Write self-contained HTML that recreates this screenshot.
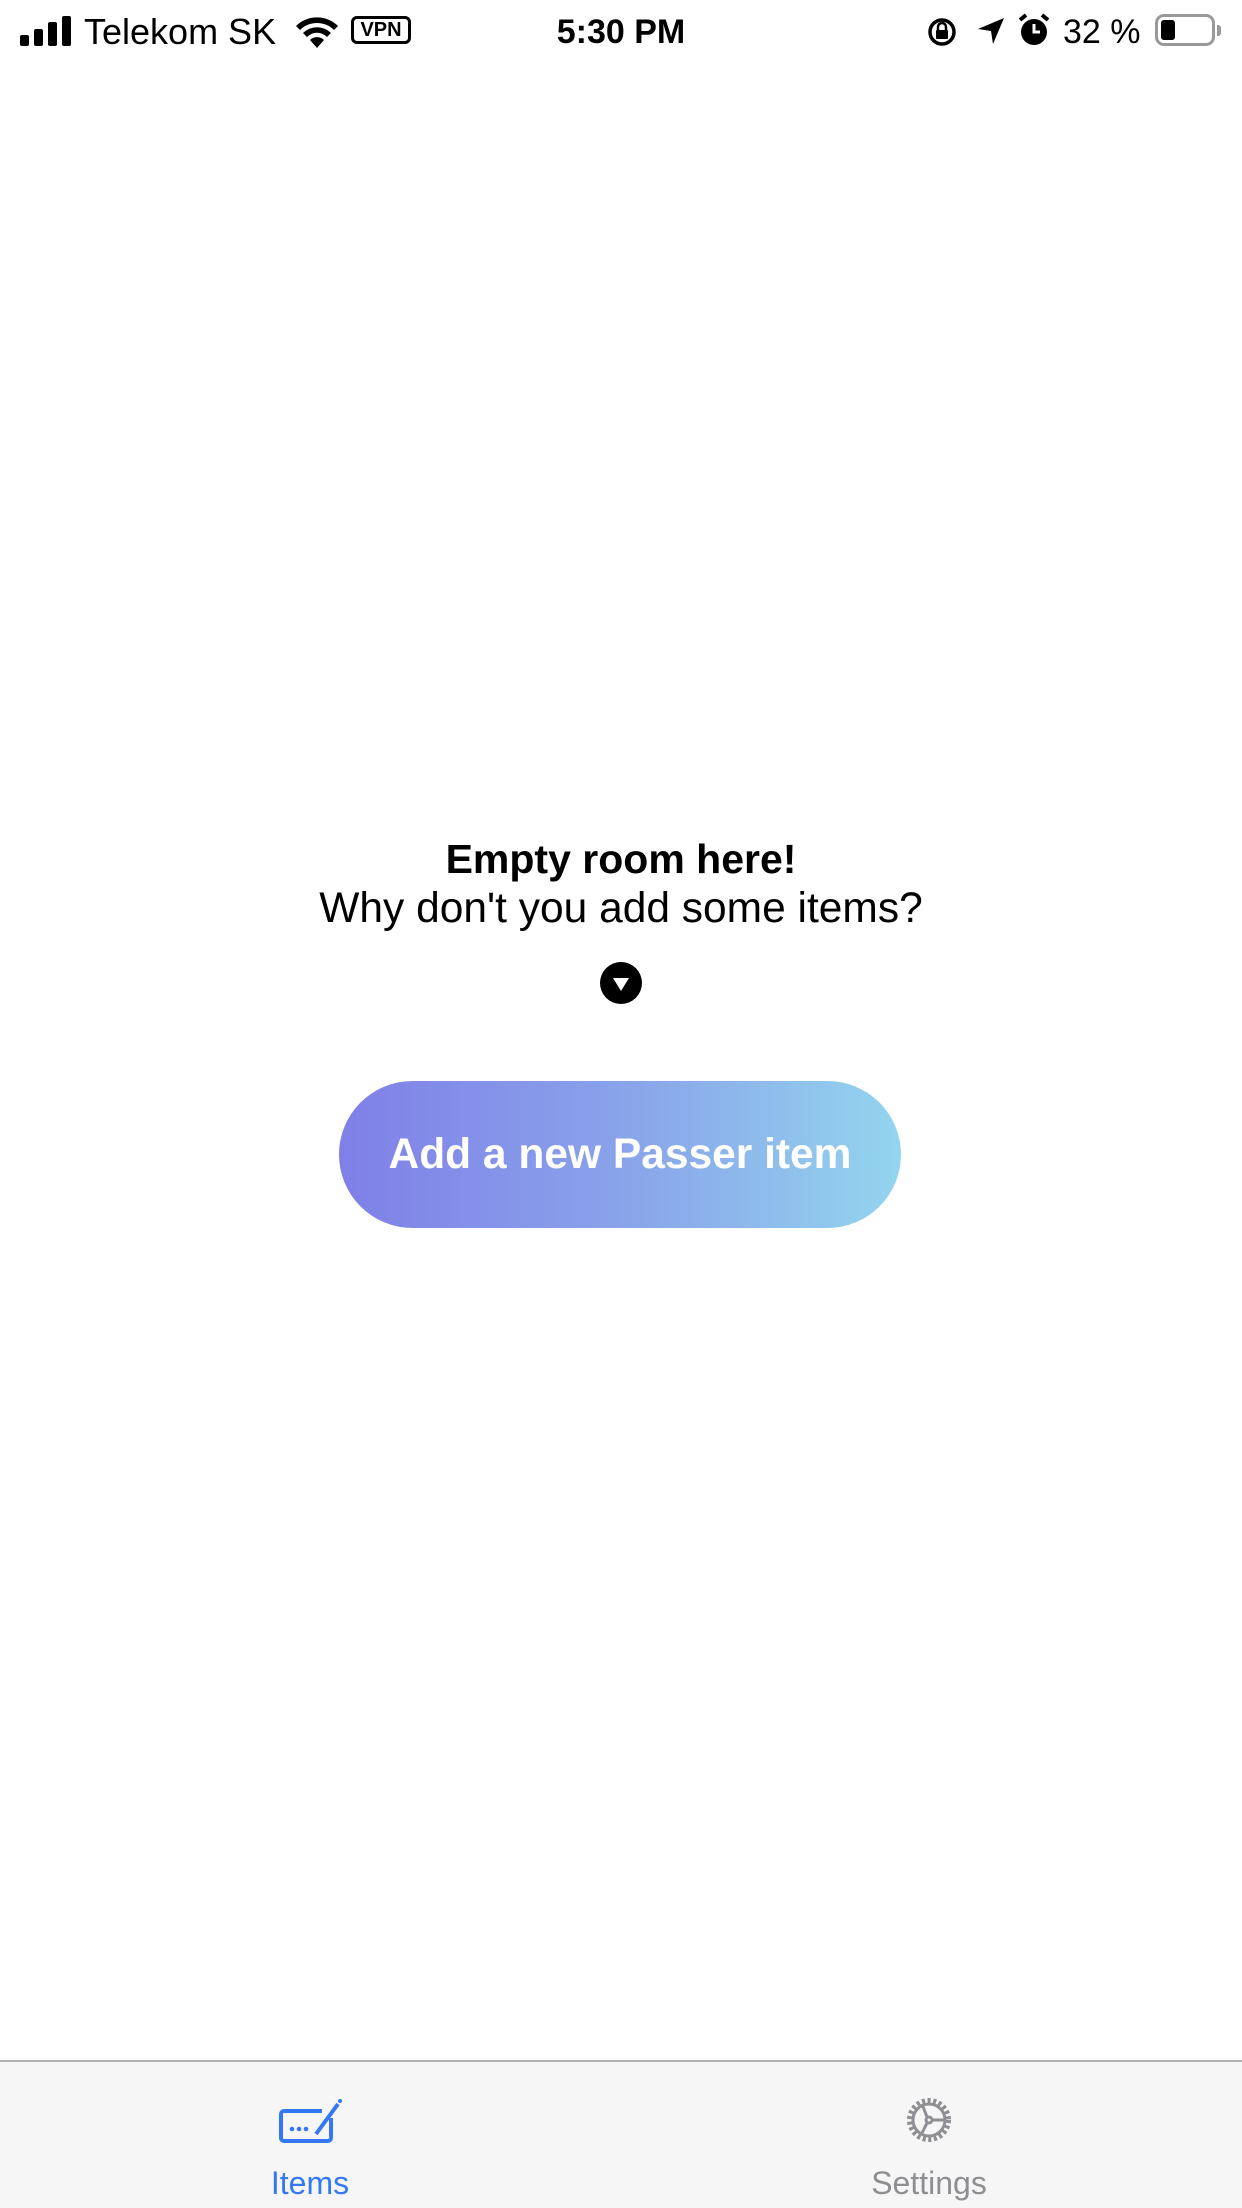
<!DOCTYPE html>
<html><head><meta charset="utf-8"><style>
*{margin:0;padding:0;box-sizing:border-box}
body{width:1242px;height:2208px;background:#fff;position:relative;overflow:hidden;font-family:"Liberation Sans",sans-serif;color:#000}
.a{position:absolute}
.sb{font-size:34px;top:12px;line-height:40px}
</style></head><body>
<svg class="a" style="left:20px;top:16px" width="52" height="30" viewBox="0 0 52 30">
<rect x="0" y="19" width="9" height="11" rx="2"/><rect x="14" y="13" width="9" height="17" rx="2"/><rect x="28" y="6" width="9" height="24" rx="2"/><rect x="42" y="0" width="9" height="30" rx="2"/></svg>
<div class="a sb" style="left:84px;font-size:36px">Telekom SK</div>
<svg class="a" style="left:294px;top:14px" width="46" height="34" viewBox="0 0 46 34">
<path d="M23 34 L16 26 A10 10 0 0 1 30 26 Z"/><path d="M9 19 A20 20 0 0 1 37 19 L33 23 A14 14 0 0 0 13 23 Z"/><path d="M2 12 A30 30 0 0 1 44 12 L40 16 A24 24 0 0 0 6 16 Z"/></svg>
<div class="a" style="left:351px;top:16px;width:60px;height:28px;border:3px solid #000;border-radius:6px;font-size:20px;line-height:22px;text-align:center;font-weight:bold">VPN</div>
<div class="a sb" style="left:0;width:1242px;text-align:center;font-weight:bold">5:30 PM</div>
<svg class="a" style="left:926px;top:16px" width="32" height="32" viewBox="0 0 32 32"><circle cx="16" cy="16" r="12" fill="none" stroke="#000" stroke-width="3.5"/><rect x="10" y="14" width="12" height="9" rx="1"/><path d="M12 14 V11 A4 4 0 0 1 20 11 V14" fill="none" stroke="#000" stroke-width="2.5"/></svg>
<svg class="a" style="left:976px;top:16px" width="30" height="30" viewBox="0 0 30 30"><path d="M28 2 L2 13 L15 15 L17 28 Z"/></svg>
<svg class="a" style="left:1017px;top:12px" width="34" height="36" viewBox="0 0 34 36"><circle cx="17" cy="20" r="13"/><path d="M17 12 V20 H23" stroke="#fff" stroke-width="3" fill="none"/><path d="M3 8 L9 3 M31 8 L25 3" stroke="#000" stroke-width="4"/></svg>
<div class="a sb" style="left:1063px">32 %</div>
<div class="a" style="left:1155px;top:14px;width:60px;height:32px;border:3px solid #999;border-radius:9px"><div style="margin:3px;width:14px;height:20px;background:#000;border-radius:3px"></div></div>
<div class="a" style="left:1217px;top:25px;width:4px;height:11px;background:#999;border-radius:0 3px 3px 0"></div>

<div class="a" style="left:0;width:1242px;top:834px;text-align:center;font-size:41px;font-weight:bold;line-height:50px">Empty room here!</div>
<div class="a" style="left:0;width:1242px;top:884px;text-align:center;font-size:42.5px;line-height:50px">Why don't you add some items?</div>
<svg class="a" style="left:600px;top:962px" width="42" height="42" viewBox="0 0 42 42"><circle cx="21" cy="21" r="21"/><path d="M13 16 H29 L21 29 Z" fill="#fff"/></svg>
<div class="a" style="left:339px;top:1081px;width:562px;height:147px;border-radius:74px;background:linear-gradient(90deg,#7f7fe8,#8aa7ea 55%,#93d5ee);color:#fff;font-weight:bold;font-size:42.5px;line-height:147px;text-align:center">Add a new Passer item</div>

<div class="a" style="left:0;top:2060px;width:1242px;height:148px;background:#f6f6f6;border-top:2px solid #b3b3b3"></div>
<svg class="a" style="left:278px;top:2098px" width="66" height="46" viewBox="0 0 66 46"><path d="M44 13 H6 A3 3 0 0 0 3 16 V40 A3 3 0 0 0 6 43 H50 A3 3 0 0 0 53 40 V20" fill="none" stroke="#3478f6" stroke-width="4"/><path d="M38 36 L60 6" stroke="#3478f6" stroke-width="4"/><circle cx="62" cy="3" r="2" fill="#3478f6"/><circle cx="14" cy="31" r="2.3" fill="#3478f6"/><circle cx="21" cy="31" r="2.3" fill="#3478f6"/><circle cx="28" cy="31" r="2.3" fill="#3478f6"/></svg>
<div class="a" style="left:210px;width:200px;top:2165px;text-align:center;font-size:32px;color:#3478f6;line-height:36px">Items</div>
<svg class="a" style="left:905px;top:2093px" width="48" height="54" viewBox="0 0 48 54"><g fill="none" stroke="#8e8e93" stroke-width="3"><circle cx="24" cy="27" r="19" stroke-dasharray="3 2.5" stroke-width="6"/><circle cx="24" cy="27" r="16"/><circle cx="24" cy="27" r="3"/><path d="M22 24 L17 11 M27 27 H40 M22 30 L16 42"/></g></svg>
<div class="a" style="left:829px;width:200px;top:2165px;text-align:center;font-size:32px;color:#8e8e93;line-height:36px">Settings</div>
</body></html>
